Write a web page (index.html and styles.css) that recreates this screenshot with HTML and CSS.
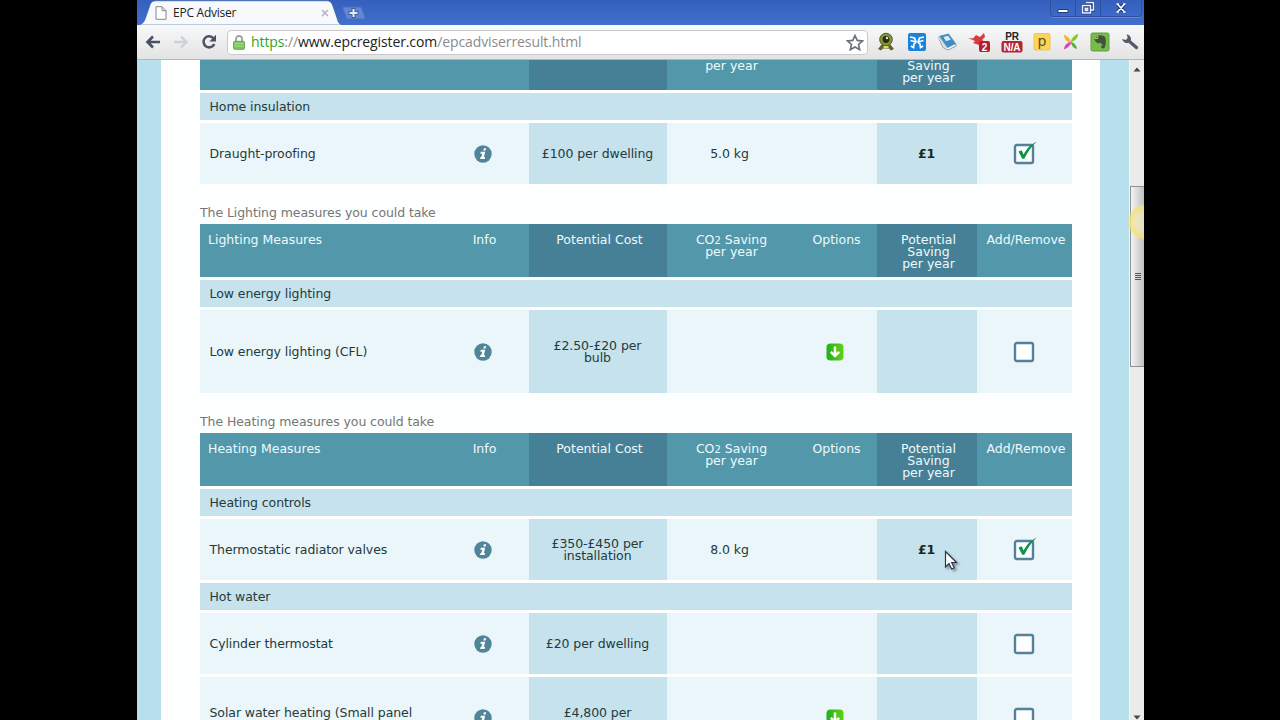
FILE: index.html
```html
<!DOCTYPE html>
<html lang="en">

<head>
    <meta charset="UTF-8">
    <meta name="viewport" content="width=device-width, initial-scale=1.0">
    <title>EPC Adviser</title>
    <link rel="stylesheet" href="styles.css">
</head>

<body>
    <!-- shared icons -->
    <svg class="defs" width="0" height="0">
        <linearGradient id="green" x1="0" x2="1">
            <stop offset="0" stop-color="#1fb01c" />
            <stop offset="1" stop-color="#66cf12" />
        </linearGradient>
        <symbol id="info" viewBox="0 0 18 18">
            <circle cx="9" cy="9" r="8.7" fill="#4f8599" />
            <path d="M9.900 3.200h2.300l-.6 2.400H9.300zM6.800 6.800h4.400l-1.300 5.200h1.200l-.4 2H6.100l.4-2h.9l.8-3.200H6.300z" fill="#fff" />
        </symbol>
        <symbol id="down" viewBox="0 0 18 18">
            <rect x=".5" y=".5" width="17" height="17" rx="4" fill="url(#green)" />
            <path d="M9 3.500v9M4.800 8.800L9 13l4.200-4.200" fill="none" stroke="#fff" stroke-width="2.500" />
        </symbol>
        <symbol id="box" viewBox="0 0 26 26">
            <rect x="4" y="4" width="18" height="18" rx="1.800" fill="#fdfefe" stroke="#54819a" stroke-width="2.400" />
        </symbol>
        <symbol id="tick" viewBox="0 0 26 26">
            <rect x="4" y="4" width="18" height="18" rx="1.800" fill="#fdfefe" stroke="#54819a" stroke-width="2.400" />
            <path d="M7.500 10.500l3.200-1.200 1.900 4.200C15.500 8 20 3 25.500 .8 20.500 5.800 16.500 11 13.300 17.700h-2.100z" fill="#0f9148" />
        </symbol>
    </svg>

    <div class="window">
        <div class="titlebar">
            <svg class="tab-shape" width="204" height="25" viewBox="0 0 204 25">
                <path d="M0 25C5 24 6 22 7.500 18L12 5C13 2 15 .8 18 .8H188C192 .8 193 2 194.500 5L199 18C200 22 201 24 204 25z" fill="#f8f9fa" stroke="#31549c" stroke-width=".6" />
            </svg>
            <div class="tab">
                <svg width="12" height="14" viewBox="0 0 12 14">
                    <path d="M1 .7h6l4 4v8.600H1zM7 .7v4h4" fill="#fff" stroke="#85888e" />
                </svg>
                <span class="tab-title">EPC Adviser</span>
                <svg width="8" height="8" viewBox="0 0 8 8">
                    <path d="M1 1l6 6M7 1L1 7" stroke="#b6aec4" stroke-width="1.500" />
                </svg>
            </div>
            <svg class="new-tab" width="24" height="14" viewBox="0 0 24 14">
                <path d="M2 1h15c2 0 2 0 3 2l3 8c.5 2 0 2-1 2H7c-2 0-2 0-3-2L1 3C.6 1.500 1 1 2 1z" fill="#6387d4" stroke="#4a6fbe" />
                <path d="M11.500 2v10M6.500 7h10" stroke="#415f9f" stroke-width="4" />
                <path d="M11.500 3v8M7.500 7h8" stroke="#e4ebf8" stroke-width="2" />
            </svg>
            <div class="controls">
                <span class="control">
                    <svg width="14" height="12" viewBox="0 0 14 12"><path d="M2 7.500h10v3H2z" fill="#fff" stroke="#203d7e" /></svg>
                </span>
                <span class="control">
                    <svg width="14" height="14" viewBox="0 0 14 14"><path d="M5 1.500h7.500V9H10M1.500 4.500h8V12h-8z" fill="none" stroke="#203d7e" stroke-width="3" /><path d="M5 1.500h7.500V9H10M1.500 4.500h8V12h-8zM4.500 7.500h2v2h-2z" fill="none" stroke="#e9effb" stroke-width="1.500" /></svg>
                </span>
                <span class="control close">
                    <svg width="12" height="12" viewBox="0 0 12 12"><path d="M2.500 2l7 8M9.500 2l-7 8" stroke="#203d7e" stroke-width="3.500" /><path d="M2.500 2l7 8M9.500 2l-7 8M1.500 2H4M8 2h2.500M1.500 10H4M8 10h2.500" stroke="#fff" stroke-width="1.700" /></svg>
                </span>
            </div>
        </div>

        <div class="toolbar">
            <div class="nav">
                <svg width="16" height="14" viewBox="0 0 16 14"><path d="M15 7H3M8 1.500L2.500 7 8 12.500" fill="none" stroke="#485162" stroke-width="2.600" /></svg>
                <svg width="16" height="14" viewBox="0 0 16 14"><path d="M1 7h12M8 1.500L13.500 7 8 12.500" fill="none" stroke="#d0d1d4" stroke-width="2.400" /></svg>
                <svg width="16" height="16" viewBox="0 0 16 16"><path d="M12.500 4.200A5.600 5.600 0 1 0 13.300 10" fill="none" stroke="#4b5362" stroke-width="2.500" /><path d="M15 .8v6.700H8.300z" fill="#4b5362" /></svg>
            </div>
            <div class="omnibox">
                <svg width="12" height="15" viewBox="0 0 12 15"><path d="M3 7V4a3 3 0 0 1 6 0v3" fill="none" stroke="#9da39d" stroke-width="1.800" /><rect x=".6" y="6.300" width="10.800" height="8" rx="1" fill="#7cc55e" stroke="#5fa84c" /><path d="M1.500 8.500h9M1.500 11h9" stroke="#a5dc8c" /></svg>
                <span class="url"><span class="secure">https</span><span class="dim">://</span>www.epcregister.com<span class="dim">/epcadviserresult.html</span></span>
                <svg width="18" height="17" viewBox="0 0 18 17"><path d="M9 1.500l2.200 4.900 5.300.5-4 3.600 1.200 5.200L9 13l-4.700 2.700 1.200-5.200-4-3.600 5.300-.5z" fill="#fff" stroke="#6a6e77" stroke-width="1.600" /></svg>
            </div>
            <div class="extensions">
                <svg width="20" height="20" viewBox="0 0 20 20"><path d="M2 17l4-5h8l4 5-3 1.500-2-2H7l-2 2z" fill="#625f2c" /><circle cx="10" cy="7.500" r="6.300" fill="#87933a" stroke="#555f25" /><circle cx="10" cy="7.500" r="3.400" fill="#25291c" /><circle cx="11" cy="6" r="1.300" fill="#dde4b4" /><path d="M7.500 14h5v2h-5z" fill="#d8e34c" /></svg>
                <svg width="20" height="20" viewBox="0 0 20 20"><rect x="1" y="1" width="18" height="18" rx="2" fill="#1c83da" /><path d="M3 5l4.500 1L9 10l-2 2-.5 3.500L4 14M3.500 8.500L9 10M17 5l-4.500 1L11 10l2 2 .5 3.500L16 14M16.500 8.500L11 10" fill="none" stroke="#fff" stroke-width="1.700" /></svg>
                <svg width="20" height="20" viewBox="0 0 20 20"><path d="M1.500 5.500L6 15.500l5 2.500 8-4v-2z" fill="#f4f7f8" stroke="#8a9aa5" /><path d="M2 4.500L11.500 2l7 9.500-8 4z" fill="#3d8fc9" stroke="#5d8fb2" /><path d="M6.500 5l4.500-1.200 2.800 3.700-4.800 1.700z" fill="#d7edf6" /><path d="M1.500 4.500l8 12" stroke="#d3dade" stroke-width="1.600" /></svg>
                <svg width="22" height="22" viewBox="0 0 22 22"><path d="M0 7l5 .5L8 4l4 2 4-4 1 4-3 3 3 2-6 3-6-2 2-2z" fill="#d83a3e" /><rect x="11" y="10" width="11" height="11" rx="2" fill="#b31f31" /><text x="16.500" y="19.500" class="badge">2</text></svg>
                <svg width="22" height="22" viewBox="0 0 22 22"><text x="11" y="8.500" class="pr">PR</text><rect x=".5" y="10" width="21" height="11.500" rx="2" fill="#b62432" /><text x="11" y="19.600" class="badge">N/A</text></svg>
                <svg width="18" height="20" viewBox="0 0 18 20"><rect x="1" y="1.500" width="16" height="16.500" rx="1.500" fill="#fbd55a" stroke="#e9c755" /><text x="9" y="13.500" class="letter">p</text></svg>
                <svg width="18" height="18" viewBox="0 0 18 18"><path d="M9 10C9 6 4 2 2 2c0 4 3 7 7 8z" fill="#efb52b" /><path d="M9 9c0-4 5-8 7-8 0 4-3 7-7 8z" fill="#82c92f" /><path d="M9 9C5 9 2 13 2 16.500 6 15 9 12 9 9z" fill="#d846ae" /><path d="M9 9c3 0 6 4 6 7-4-1-6-4-6-7z" fill="#54b436" /></svg>
                <svg width="20" height="20" viewBox="0 0 20 20"><rect x="1" y="1" width="18" height="18" rx="1.500" fill="#77bb49" stroke="#669e42" /><path d="M4.500 7L8 3.500c3-.8 7 .3 7.500 2.500.6 3 .5 7-.8 9.500-1 1.500-4 1-3.700-.9.200-1.300 1.500-1.300 2-1.100-1-1.500-2-1.500-2.500-3-1.500 1.700-5 1-6-3.500z" fill="#44513d" /><path d="M5 6.500h2.800V3.800" fill="none" stroke="#a5d680" /></svg>
                <svg width="18" height="18" viewBox="0 0 18 18"><path d="M5.500 1.500C8 1.500 10 3.300 10 6l-.2 1.400 7 6.200c1.200 1.300-.6 3.500-2.200 2.300L7.500 9.700C4.500 10.700 1.500 8.700 1.200 6l3.600.9 2-2.200z" fill="#515a69" /></svg>
            </div>
        </div>

        <div class="viewport">
            <div class="page">
                <div class="content">
                    <!-- end of the insulation table, header scrolled away -->
                    <div class="measures">
                        <div class="row head scrolled">
                            <div class="name"></div>
                            <div></div>
                            <div class="shade"></div>
                            <div>per year</div>
                            <div></div>
                            <div class="shade">Saving<br>per year</div>
                            <div></div>
                        </div>
                        <div class="group">Home insulation</div>
                        <div class="row">
                            <div class="name">Draught-proofing</div>
                            <div><svg class="icon"><use href="#info" /></svg></div>
                            <div class="shade">£100 per dwelling</div>
                            <div>5.0 kg</div>
                            <div></div>
                            <div class="shade saving">£1</div>
                            <div><svg class="check"><use href="#tick" /></svg></div>
                        </div>
                    </div>

                    <!-- lighting -->
                    <div class="caption">The Lighting measures you could take</div>
                    <div class="measures">
                        <div class="row head">
                            <div class="name">Lighting Measures</div>
                            <div>Info</div>
                            <div class="shade">Potential Cost</div>
                            <div>CO<small>2</small> Saving<br>per year</div>
                            <div>Options</div>
                            <div class="shade">Potential<br>Saving<br>per year</div>
                            <div>Add/Remove</div>
                        </div>
                        <div class="group">Low energy lighting</div>
                        <div class="row tall">
                            <div class="name">Low energy lighting (CFL)</div>
                            <div><svg class="icon"><use href="#info" /></svg></div>
                            <div class="shade">£2.50-£20 per<br>bulb</div>
                            <div></div>
                            <div><svg class="icon"><use href="#down" /></svg></div>
                            <div class="shade saving"></div>
                            <div><svg class="check"><use href="#box" /></svg></div>
                        </div>
                    </div>

                    <!-- heating -->
                    <div class="caption">The Heating measures you could take</div>
                    <div class="measures">
                        <div class="row head">
                            <div class="name">Heating Measures</div>
                            <div>Info</div>
                            <div class="shade">Potential Cost</div>
                            <div>CO<small>2</small> Saving<br>per year</div>
                            <div>Options</div>
                            <div class="shade">Potential<br>Saving<br>per year</div>
                            <div>Add/Remove</div>
                        </div>
                        <div class="group">Heating controls</div>
                        <div class="row">
                            <div class="name">Thermostatic radiator valves</div>
                            <div><svg class="icon"><use href="#info" /></svg></div>
                            <div class="shade">£350-£450 per<br>installation</div>
                            <div>8.0 kg</div>
                            <div></div>
                            <div class="shade saving">£1</div>
                            <div><svg class="check"><use href="#tick" /></svg></div>
                        </div>
                        <div class="group hot-water">Hot water</div>
                        <div class="row">
                            <div class="name">Cylinder thermostat</div>
                            <div><svg class="icon"><use href="#info" /></svg></div>
                            <div class="shade">£20 per dwelling</div>
                            <div></div>
                            <div></div>
                            <div class="shade saving"></div>
                            <div><svg class="check"><use href="#box" /></svg></div>
                        </div>
                        <div class="row tall last">
                            <div class="name">Solar water heating (Small panel</div>
                            <div><svg class="icon"><use href="#info" /></svg></div>
                            <div class="shade">£4,800 per</div>
                            <div></div>
                            <div><svg class="icon"><use href="#down" /></svg></div>
                            <div class="shade saving"></div>
                            <div><svg class="check"><use href="#box" /></svg></div>
                        </div>
                    </div>
                </div>
            </div>
            <div class="scrollbar">
                <svg class="arrow" width="8" height="5" viewBox="0 0 8 5"><path d="M4 .5l3.500 4h-7z" fill="#444" /></svg>
                <div class="thumb"><i></i><i></i><i></i><i></i></div>
                <svg class="arrow" width="8" height="5" viewBox="0 0 8 5"><path d="M4 4.500l3.500-4h-7z" fill="#444" /></svg>
            </div>
            <div class="glow"></div>
        </div>
    </div>

    <svg class="cursor" width="18" height="23" viewBox="0 0 18 23">
        <path d="M1.500 1.500v15.500l3.500-3.400 2.600 5.400 2.600-1.200-2.500-5.300h4.800z" fill="#fff" stroke="#30344a" stroke-width="1.200" />
    </svg>
</body>

</html>
```
FILE: styles.css
```css
* {
    box-sizing: border-box;
}

body {
    margin: 0;
    height: 720px;
    overflow: hidden;
    background: #000;
    font-family: "DejaVu Sans", sans-serif;
    font-size: 12.5px;
    letter-spacing: -0.08px;
    color: #243a3b;
}

svg {
    display: block;
    flex: none;
}

.defs {
    position: absolute;
}

.window {
    width: 1007px;
    height: 720px;
    margin-left: 137px;
    overflow: hidden;
}

/* title bar */
.titlebar {
    position: relative;
    display: flex;
    height: 25px;
    background: linear-gradient(#345fbd, #426fcf);
}

.tab-shape {
    position: absolute;
    left: 1px;
    top: 0;
}

.tab {
    position: relative;
    display: flex;
    align-items: center;
    width: 193px;
    margin-left: 18px;
    padding-right: 18px;
    font-family: "Open Sans", sans-serif;
    font-size: 12px;
    letter-spacing: -0.25px;
    color: #222;
}

.tab-title {
    flex: 1;
    margin-left: 6px;
}

.tab svg:last-child {
    margin-right: 1px;
}

.new-tab {
    margin: 6px 0 0 -6px;
    z-index: 1;
}

.controls {
    display: flex;
    height: 17px;
    margin-left: auto;
    margin-right: 2px;
    border: 1px solid #2d519d;
    border-top: 0;
    border-radius: 0 0 4px 4px;
    box-shadow: 0 1px 0 #6486d2;
}

.control {
    display: flex;
    align-items: center;
    justify-content: center;
    width: 25px;
    border-right: 1px solid #2d519d;
}

.control.close {
    width: 40px;
    border: 0;
}

/* toolbar */
.toolbar {
    display: flex;
    align-items: center;
    height: 35px;
    background: linear-gradient(#f8f9fa, #e3e3e4);
    border-bottom: 1px solid #b4b6b8;
}

.nav {
    display: flex;
    align-items: center;
    gap: 12px;
    width: 90px;
    padding-left: 8px;
}

.omnibox {
    display: flex;
    align-items: center;
    width: 641px;
    height: 25px;
    padding: 0 3px 0 5px;
    background: #fff;
    border: 1px solid #c8cacc;
    border-radius: 4px;
}

.url {
    flex: 1;
    margin: -1px 0 0 6px;
    font-family: "Open Sans", sans-serif;
    font-size: 14px;
    letter-spacing: -0.1px;
    color: #222;
    white-space: nowrap;
}

.secure {
    color: #2ba62b;
}

.dim {
    color: #8c8c8c;
}

.extensions {
    display: flex;
    align-items: center;
    justify-content: space-between;
    width: 263px;
    margin-left: 8px;
}

.badge {
    fill: #fff;
    font: bold 10px "Liberation Sans", sans-serif;
    text-anchor: middle;
}

.pr {
    fill: #222;
    font: bold 10px "Liberation Sans", sans-serif;
    text-anchor: middle;
}

.letter {
    fill: #5b4c22;
    font: 14px "DejaVu Sans", sans-serif;
    text-anchor: middle;
}

/* web page */
.viewport {
    position: relative;
    display: flex;
    height: 660px;
    overflow: hidden;
    background: #b7dfec;
}

.page {
    width: 939px;
    height: 660px;
    margin-left: 24px;
    overflow: hidden;
    background: #fdfefe;
}

.content {
    width: 872px;
    margin-left: 39px;
}

.caption {
    height: 40px;
    padding-top: 21px;
    line-height: 16px;
    color: #767676;
}

.measures {
    display: flex;
    flex-direction: column;
    gap: 3px;
}

.row {
    display: grid;
    grid-template-columns: 237px 92px 138px 126px 84px 100px 95px;
    height: 61px;
    background: #ebf6fa;
    line-height: 12px;
    text-align: center;
}

.row > div {
    display: flex;
    align-items: center;
    justify-content: center;
    padding-right: 1px;
    white-space: nowrap;
}

.row > .name {
    justify-content: flex-start;
    padding-left: 9.5px;
    text-align: left;
}

.row > .shade {
    background: #c6e2ed;
}

.row.tall {
    height: 83px;
}

/* only the top of this row is on screen */
.row.last {
    height: 43px;
}

.row.last > div {
    align-items: flex-start;
    padding-top: 30px;
}

.row.last .icon {
    margin-top: 2px;
}

.row.last .check {
    margin-top: -2px;
}

.row.head {
    height: 53px;
    background: #5298aa;
    color: #eefafc;
    letter-spacing: 0;
}

.row.head > div {
    display: block;
    padding: 10px 0 0 3px;
}

.row.head > .name {
    padding-left: 8px;
}

.row.head > .shade {
    background: #468096;
}

.row.head small {
    font-size: 10px;
    line-height: 0;
}

.row.head.scrolled {
    height: 30px;
}

.row.head.scrolled > div {
    padding-top: 0;
}

.row > .saving {
    font-weight: bold;
    color: #142a20;
}

.group {
    height: 27px;
    padding-left: 9.5px;
    background: #c6e2ed;
    line-height: 27px;
}

.group.hot-water {
    line-height: 28px;
}

.icon {
    width: 18px;
    height: 18px;
}

.check {
    width: 26px;
    height: 26px;
}

/* scrollbar */
.scrollbar {
    display: flex;
    flex-direction: column;
    align-items: center;
    width: 15px;
    margin-left: auto;
    padding-top: 7px;
    background: #ebebec;
    border-left: 1px solid #f5f6f6;
}

.thumb {
    display: flex;
    flex-direction: column;
    align-items: center;
    justify-content: center;
    gap: 1px;
    width: 14px;
    height: 182px;
    margin: 114px 0 348px;
    background: linear-gradient(90deg, #f4f4f4, #bfc0c2);
    border: 1px solid #8f9194;
    border-right: 0;
}

.thumb i {
    width: 6px;
    height: 1px;
    background: #555;
}

/* pointer highlight at the window edge */
.glow {
    position: absolute;
    top: 144px;
    right: -20px;
    width: 36px;
    height: 36px;
    border-radius: 50%;
    background: radial-gradient(rgba(238, 232, 190, 0.8) 35%, rgba(246, 228, 118, 0.85) 62%, rgba(246, 228, 118, 0.3) 71%);
}

.cursor {
    position: absolute;
    left: 944px;
    top: 550px;
    filter: drop-shadow(2px 2px 1px rgba(0, 0, 0, 0.35));
}
```
